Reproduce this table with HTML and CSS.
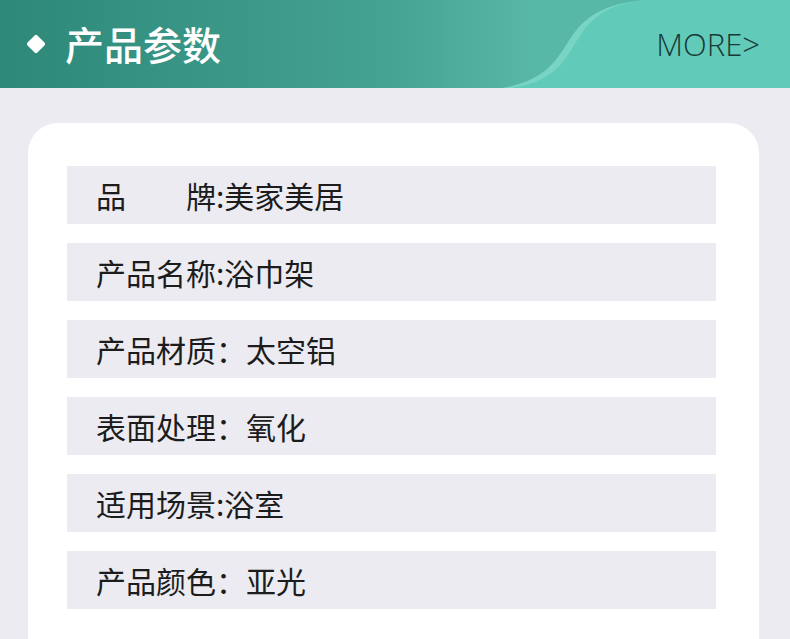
FILE: index.html
```html
<!DOCTYPE html>
<html lang="zh-CN">
<head>
<meta charset="utf-8">
<link rel="stylesheet" href="styles.css">
</head>
<body>
<header class="header">
  <svg class="wave" width="790" height="88" viewBox="0 0 790 88" aria-hidden="true">
    <path d="M502,88 C550,80 558,56 572,36 C588,12 614,1 652,0 L790,0 L790,88 Z" fill="#78d4c3"/>
    <path d="M512,88 C560,80 566,56 580,36 C595,12 618,1 652,0 L790,0 L790,88 Z" fill="#62cab9"/>
  </svg>
  <div class="title">
    <span class="diamond"></span>
    <h1>产品参数</h1>
  </div>
  <div class="more">MORE&gt;</div>
</header>
<main class="page">
  <section class="card">
    <div class="row">品　　牌:美家美居</div>
    <div class="row">产品名称:浴巾架</div>
    <div class="row">产品材质：太空铝</div>
    <div class="row">表面处理：氧化</div>
    <div class="row">适用场景:浴室</div>
    <div class="row">产品颜色：亚光</div>
  </section>
</main>
</body>
</html>
```

FILE: styles.css
```css
html, body {
  margin: 0;
  padding: 0;
}
body {
  background: #ebebf1;
  font-family: "Noto Sans CJK SC", "Noto Sans", sans-serif;
  width: 790px;
  height: 639px;
  overflow: hidden;
}
.header {
  position: relative;
  height: 88px;
  background: linear-gradient(90deg, #2d8878 0%, #45a393 50%, #58b8a8 68%);
  display: flex;
  align-items: center;
  justify-content: space-between;
  padding: 0 30px 0 29px;
  box-sizing: border-box;
  overflow: hidden;
}
.wave {
  position: absolute;
  left: 0;
  top: 0;
}
.title {
  position: relative;
  display: flex;
  align-items: center;
  gap: 22px;
  margin-top: -1px;
}
.diamond {
  width: 14px;
  height: 14px;
  background: #fff;
  border-radius: 2px;
  transform: rotate(45deg);
}
.title h1 {
  margin: 0;
  color: #fff;
  font-size: 39px;
  font-weight: 500;
  line-height: 1;
}
.more {
  position: relative;
  font-family: "Open Sans", "Noto Sans", sans-serif;
  font-weight: 300;
  font-size: 31px;
  color: #173a36;
  margin-top: 0;
}
.page {
  padding: 35px 31px 0 28px;
}
.card {
  background: #fff;
  border-radius: 30px 30px 0 0;
  padding: 43px 43px 0 39px;
  display: flex;
  flex-direction: column;
  gap: 19px;
  height: 516px;
  box-sizing: border-box;
}
.row {
  height: 58px;
  background: #ebebf1;
  display: flex;
  align-items: center;
  padding-left: 29px;
  font-size: 30px;
  color: #1c1c1c;
  flex-shrink: 0;
}
```
